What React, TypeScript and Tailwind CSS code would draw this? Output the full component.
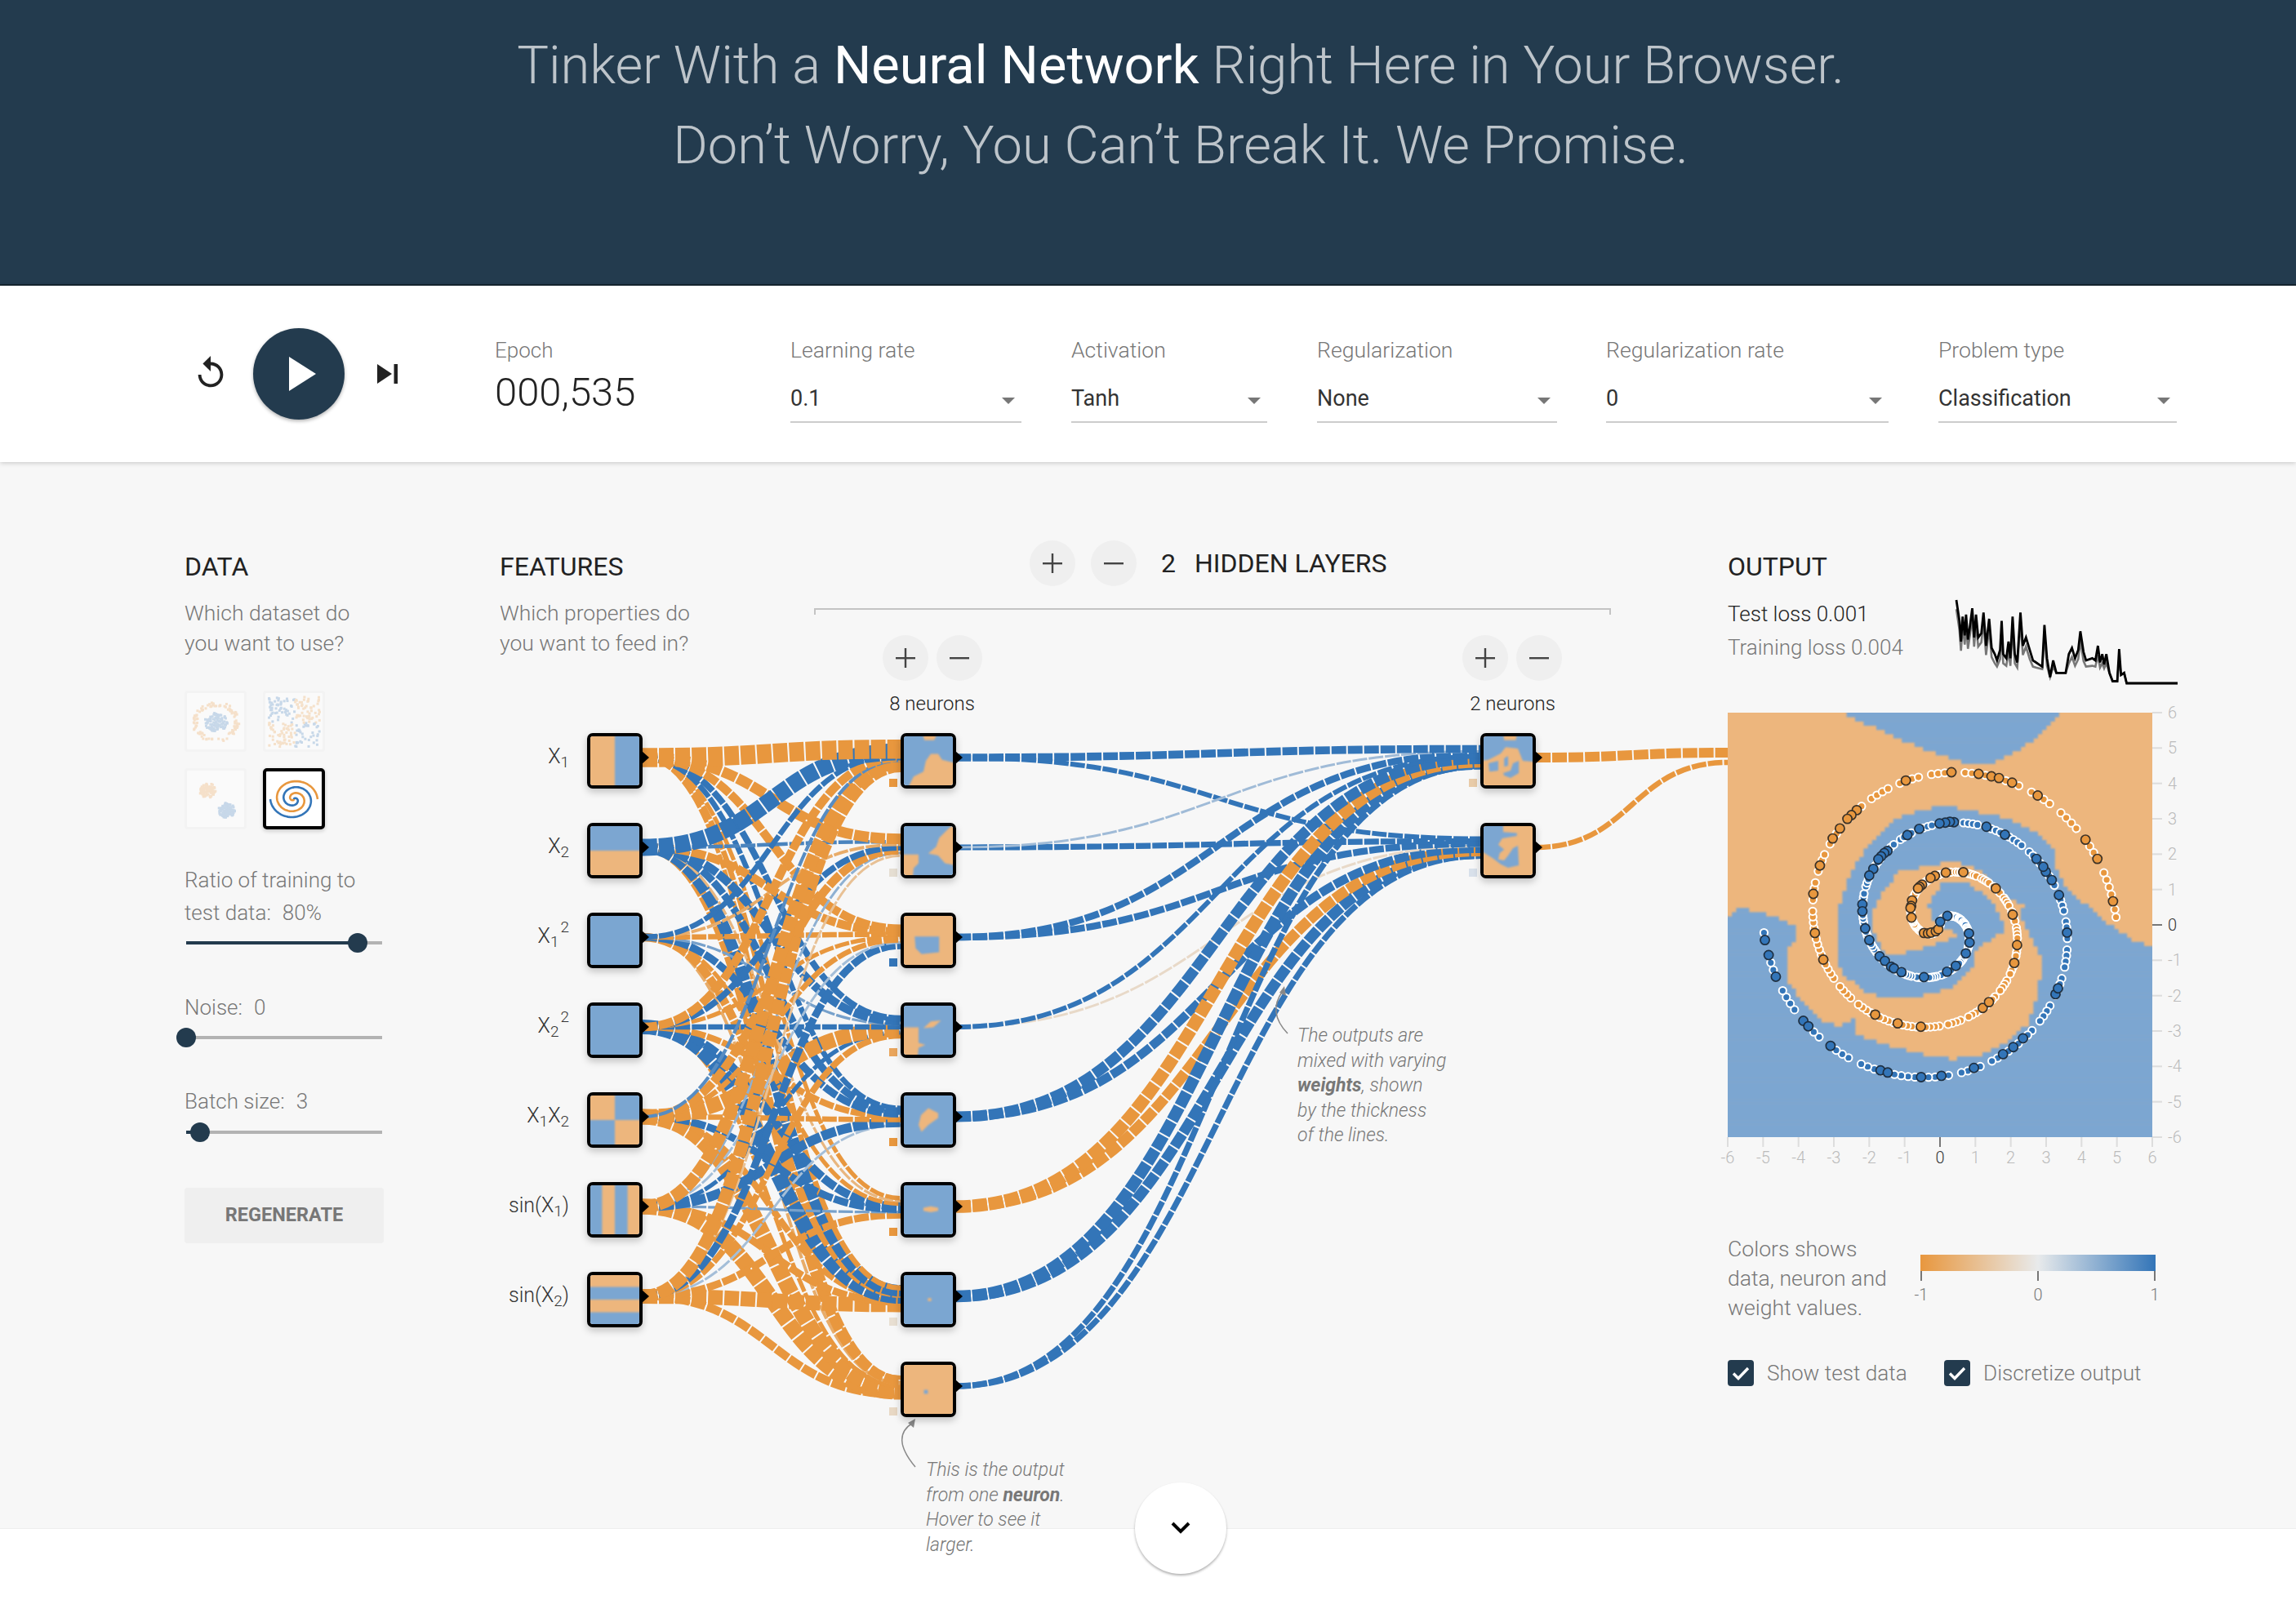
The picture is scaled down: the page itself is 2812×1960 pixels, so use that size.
import { useMemo } from 'react';

const ORANGE = '#E8973E';
const BLUE = '#3375B8';
const HEAT_ORANGE = '#EDB67D';
const HEAT_BLUE = '#7BA6D1';

type Poly = number[][];

// signed stroke width: positive is blue, negative is orange
const layer1: number[][] = [
  [-18, 16, 5, -8, 3.2, -12, -12],
  [-10, 3.5, -3, 6, -8, 2, -2],
  [-8, -8, -5, -4, -5, 1.5, 7],
  [6, 8, 2.5, 5, -14, 4, -6],
  [5, 7, 7, -6, -5, 9, 1.5],
  [-4, -2.5, -4, 8, 7, 2.5, -7],
  [-5, 11, -8, 14, -6, -7, -14],
  [-4, -9, -3, -4, -15, -15, -8],
];
const layer2: number[][] = [
  [8, 1.6, 7, 5, 11, -13, 12, 6],
  [5, 6, 7, -0.8, 9, -11, 11, 6],
];

const rows = [932, 1042, 1152, 1262, 1372, 1482, 1592, 1702];

const mix = (a: string, b: string, t: number) => {
  const p = (s: string, i: number) => parseInt(s.slice(i, i + 2), 16);
  const c = [1, 3, 5].map((i) => Math.round(p(a, i) + (p(b, i) - p(a, i)) * t));
  return `rgb(${c[0]},${c[1]},${c[2]})`;
};

const linkColor = (w: number) =>
  mix('#E8EAEB', w > 0 ? BLUE : ORANGE, Math.min(1, Math.abs(w) / 4));

const Link = ({ x1, y1, x2, y2, w, scale }: { x1: number; y1: number; x2: number; y2: number; w: number; scale: number }) => {
  const mx = (x1 + x2) / 2;
  return (
    <path
      d={`M${x1} ${y1}C${mx} ${y1} ${mx} ${y2} ${x2} ${y2}`}
      fill="none"
      stroke={linkColor(w)}
      strokeWidth={Math.max(3, Math.abs(w) * scale)}
      strokeDasharray="18 2"
    />
  );
};

const Network = () => {
  const links = [];
  for (let k = 1; k >= 0; k--) {
    links.push(<Link key={`o${k}`} x1={1881} y1={rows[k] - 4} x2={2116} y2={928 + (k === 0 ? -6 : 6)} w={k === 0 ? -12 : -6.5} scale={1} />);
  }
  for (let k = 1; k >= 0; k--) {
    for (let j = 7; j >= 0; j--) {
      links.push(
        <Link key={`b${k}${j}`} x1={1171} y1={rows[j] - 4} x2={1813} y2={rows[k] - 4 + ((j - 3.5) / 8) * 24} w={layer2[k][j]} scale={1.2} />,
      );
    }
  }
  for (let j = 7; j >= 0; j--) {
    for (let i = 6; i >= 0; i--) {
      links.push(
        <Link key={`a${j}${i}`} x1={787} y1={rows[i] - 4} x2={1103} y2={rows[j] - 4 + ((i - 3) / 7) * 24} w={layer1[j][i]} scale={1.3} />,
      );
    }
  }
  return (
    <svg className="absolute left-0 top-0 overflow-visible" width={1505} height={1040} viewBox="611 846 1505 1040">
      <defs>
        <filter id="soft" filterUnits="userSpaceOnUse" x="-10" y="-10" width="120" height="120">
          <feGaussianBlur stdDeviation="1.4" />
        </filter>
      </defs>
      {links}
      <g fill="#888">
        <path d="M1577 1266Q1552 1240 1571 1214" fill="none" stroke="#888" strokeWidth="1.5" />
        <polygon points="1573,1208 1575,1220 1567,1216" />
        <path d="M1121 1797Q1090 1760 1118 1743" fill="none" stroke="#888" strokeWidth="1.5" />
        <polygon points="1121,1738 1119,1749 1112,1743" />
      </g>
    </svg>
  );
};

// small picture inside a node, coordinates 0..100
const Thumb = ({ bg, fg, polys }: { bg: string; fg: string; polys: Poly[] }) => (
  <svg viewBox="0 0 100 100" className="block w-full h-full">
    <rect x="0" y="0" width="100" height="100" fill={bg} />
    <g filter="url(#soft)">
      {polys.map((p, i) => (
        <polygon
          key={i}
          fill={fg}
          points={p.map(([x, y]) => `${x <= 0 ? -6 : x >= 100 ? 106 : x},${y <= 0 ? -6 : y >= 100 ? 106 : y}`).join(' ')}
        />
      ))}
    </g>
  </svg>
);

const rect = (x1: number, y1: number, x2: number, y2: number): Poly => [
  [x1, y1],
  [x2, y1],
  [x2, y2],
  [x1, y2],
];

const Node = ({ x, y, bg, fg, polys }: { x: number; y: number; bg: string; fg: string; polys: Poly[] }) => (
  <>
    <div
      className="absolute w-[68px] h-[68px] rounded-[7px] border-4 border-black overflow-hidden bg-white shadow-[0_4px_10px_rgba(0,0,0,0.22)]"
      style={{ left: x - 611, top: y - 34 - 846 }}
    >
      <Thumb bg={bg} fg={fg} polys={polys} />
    </div>
    <svg className="absolute" width={9} height={16} style={{ left: x + 68 - 611 - 1, top: y - 4 - 8 - 846 }}>
      <polygon points="0,0 9,8 0,16" fill="#000" />
    </svg>
  </>
);

const inputNodes: { label: React.ReactNode; bg: string; fg: string; polys: Poly[] }[] = [
  { label: <>X<sub className="text-[19px]">1</sub></>, bg: HEAT_ORANGE, fg: HEAT_BLUE, polys: [rect(50, 0, 100, 100)] },
  { label: <>X<sub className="text-[19px]">2</sub></>, bg: HEAT_ORANGE, fg: HEAT_BLUE, polys: [rect(0, 0, 100, 50)] },
  { label: <>X<sub className="text-[19px]">1</sub><sup className="text-[19px] ml-[2px] top-[-0.7em]">2</sup></>, bg: HEAT_BLUE, fg: HEAT_BLUE, polys: [] },
  { label: <>X<sub className="text-[19px]">2</sub><sup className="text-[19px] ml-[2px] top-[-0.7em]">2</sup></>, bg: HEAT_BLUE, fg: HEAT_BLUE, polys: [] },
  {
    label: <>X<sub className="text-[19px]">1</sub>X<sub className="text-[19px]">2</sub></>,
    bg: HEAT_BLUE,
    fg: HEAT_ORANGE,
    polys: [rect(0, 0, 50, 50), rect(50, 50, 100, 100)],
  },
  {
    label: <>sin(X<sub className="text-[19px]">1</sub>)</>,
    bg: HEAT_BLUE,
    fg: HEAT_ORANGE,
    polys: [rect(24, 0, 50, 100), rect(76, 0, 100, 100)],
  },
  {
    label: <>sin(X<sub className="text-[19px]">2</sub>)</>,
    bg: HEAT_BLUE,
    fg: HEAT_ORANGE,
    polys: [rect(0, 0, 100, 24), rect(0, 50, 100, 76)],
  },
];

const hidden1: { bg: string; fg: string; polys: Poly[]; bias: string }[] = [
  {
    bg: HEAT_BLUE,
    fg: HEAT_ORANGE,
    bias: ORANGE,
    polys: [
      [[8, 100], [20, 82], [40, 72], [45, 50], [55, 36], [70, 36], [78, 48], [100, 55], [100, 100]],
      [[38, 0], [68, 0], [62, 8], [42, 8]],
    ],
  },
  {
    bg: HEAT_BLUE,
    fg: HEAT_ORANGE,
    bias: '#E5DED2',
    polys: [
      [[100, 0], [92, 4], [72, 24], [66, 42], [50, 56], [70, 60], [84, 76], [100, 80]],
      [[0, 58], [30, 58], [30, 76], [20, 86], [18, 100], [0, 100]],
    ],
  },
  { bg: HEAT_ORANGE, fg: HEAT_BLUE, bias: BLUE, polys: [[[22, 42], [72, 42], [72, 74], [36, 78], [24, 66]]] },
  {
    bg: HEAT_BLUE,
    fg: HEAT_ORANGE,
    bias: '#E9A55C',
    polys: [
      [[0, 44], [30, 44], [30, 76], [44, 80], [30, 86], [28, 100], [0, 100]],
      [[40, 46], [55, 32], [76, 30], [60, 44]],
    ],
  },
  { bg: HEAT_BLUE, fg: HEAT_ORANGE, bias: ORANGE, polys: [[[35, 40], [50, 26], [70, 36], [70, 46], [50, 60], [36, 74], [30, 60]]] },
  { bg: HEAT_BLUE, fg: HEAT_ORANGE, bias: ORANGE, polys: [[[40, 46], [55, 43], [70, 46], [70, 52], [55, 55], [40, 52]]] },
  { bg: HEAT_BLUE, fg: HEAT_ORANGE, bias: '#E8DFD2', polys: [[[49, 47], [56, 47], [56, 53], [49, 53]]] },
  { bg: HEAT_ORANGE, fg: HEAT_BLUE, bias: '#E8D8C4', polys: [[[41, 51], [49, 51], [49, 59], [41, 59]]] },
];

const hidden2: { bg: string; fg: string; polys: Poly[]; bias: string }[] = [
  {
    bg: HEAT_ORANGE,
    fg: HEAT_BLUE,
    bias: '#E8CBA8',
    polys: [
      [[0, 0], [40, 0], [42, 8], [66, 8], [68, 0], [100, 0], [100, 52], [80, 50], [70, 25], [45, 22], [35, 35], [10, 48], [0, 50]],
      [[10, 55], [30, 50], [30, 70], [12, 72]],
      [[42, 45], [50, 40], [50, 60], [42, 62]],
      [[40, 75], [55, 70], [60, 55], [72, 50], [72, 75], [55, 85], [42, 80]],
    ],
  },
  {
    bg: HEAT_ORANGE,
    fg: HEAT_BLUE,
    bias: '#D8E0EA',
    polys: [[[0, 0], [40, 0], [40, 12], [68, 14], [68, 20], [38, 25], [30, 38], [42, 48], [33, 55], [30, 68], [42, 70], [50, 60], [60, 45], [70, 40], [72, 80], [50, 85], [35, 78], [18, 65], [0, 50]]],
  },
];

const Diagram = () => (
  <div className="relative z-10 w-[1505px] h-[1040px]">
    <Network />
    {inputNodes.map((n, i) => (
      <div key={i}>
        <div
          className="absolute left-0 w-[86px] h-[40px] flex items-center justify-end text-[25px] text-[#333] whitespace-nowrap"
          style={{ top: rows[i] - 25 - 846 }}
        >
          <span>{n.label}</span>
        </div>
        <Node x={719} y={rows[i]} bg={n.bg} fg={n.fg} polys={n.polys} />
      </div>
    ))}
    {hidden1.map((n, i) => (
      <div key={i}>
        <div className="absolute w-[10px] h-[10px]" style={{ left: 1089 - 611, top: rows[i] + 22 - 846, background: n.bias }} />
        <Node x={1103} y={rows[i]} bg={n.bg} fg={n.fg} polys={n.polys} />
      </div>
    ))}
    {hidden2.map((n, i) => (
      <div key={i}>
        <div className="absolute w-[10px] h-[10px]" style={{ left: 1799 - 611, top: rows[i] + 22 - 846, background: n.bias }} />
        <Node x={1813} y={rows[i]} bg={n.bg} fg={n.fg} polys={n.polys} />
      </div>
    ))}
    <div className="absolute left-[477px] top-[2px] w-[107px] text-center text-[24px] leading-[28px] text-[#222] whitespace-nowrap">8 neurons</div>
    <div className="absolute left-[1188px] top-[2px] w-[107px] text-center text-[24px] leading-[28px] text-[#222] whitespace-nowrap">2 neurons</div>
    <div className="absolute left-[978px] top-[408px] text-[23px] leading-[30.5px] italic text-[#777]">
      The outputs are<br />mixed with varying<br /><b className="font-bold">weights</b>, shown<br />by the thickness<br />of the lines.
    </div>
    <div className="absolute left-[523px] top-[940px] text-[23px] leading-[30.5px] italic text-[#777]">
      This is the output<br />from one <b className="font-bold">neuron</b>.<br />Hover to see it<br />larger.
    </div>
  </div>
);

const RoundBtn = ({ plus }: { plus?: boolean }) => (
  <button className="w-[56px] h-[56px] rounded-full bg-[#EFEFEF] flex items-center justify-center shrink-0">
    <svg width="24" height="24" viewBox="0 0 24 24">
      <rect x="0" y="11" width="24" height="2.4" fill="#444" />
      {plus && <rect x="10.8" y="0" width="2.4" height="24" fill="#444" />}
    </svg>
  </button>
);

const Select = ({ label, value, w, ml }: { label: string; value: string; w: string; ml: string }) => (
  <div className={`${w} ${ml} shrink-0`}>
    <div className="text-[26.6px] leading-[32px] text-[#777]">{label}</div>
    <div className="mt-[23px] h-[50px] border-b-2 border-[#CCC] flex items-start justify-between pr-[8px]">
      <span className="text-[27px] leading-[40px] text-[#333] font-normal">{value}</span>
      <svg width="16" height="8" className="mt-[19px]">
        <polygon points="0,0 16,0 8,8" fill="#777" />
      </svg>
    </div>
  </div>
);

const TopBar = () => (
  <div className="relative z-20 h-[216px] bg-white shadow-[0_1px_6px_rgba(0,0,0,0.2)] flex pl-[235px]">
    <div className="mt-[84px] w-[46px] h-[46px]">
      <svg width="46" height="46" viewBox="0 0 24 24">
        <path d="M12 5V1L7 6l5 5V7c3.31 0 6 2.69 6 6s-2.69 6-6 6-6-2.69-6-6H4c0 4.42 3.58 8 8 8s8-3.58 8-8-3.58-8-8-8z" fill="#222" />
      </svg>
    </div>
    <button className="ml-[29px] mt-[52px] w-[112px] h-[112px] rounded-full bg-[#233B4E] flex items-center justify-center shadow-[0_2px_4px_rgba(0,0,0,0.3)]">
      <svg width="33" height="42" className="ml-[8px]">
        <polygon points="0,0 33,21 0,42" fill="#fff" />
      </svg>
    </button>
    <svg className="ml-[40px] mt-[96px]" width="25" height="24">
      <polygon points="0,0 18,12 0,24" fill="#222" />
      <rect x="20.5" y="0" width="4.5" height="24" fill="#222" />
    </svg>
    <div className="ml-[119px] mt-[63px] w-[362px] shrink-0">
      <div className="text-[26px] leading-[32px] text-[#777]">Epoch</div>
      <div className="mt-[8px] text-[49px] leading-[56px] text-[#222]">000,535</div>
    </div>
    <div className="mt-[63px] flex">
      <Select label="Learning rate" value="0.1" w="w-[283px]" ml="ml-0" />
      <Select label="Activation" value="Tanh" w="w-[240px]" ml="ml-[61px]" />
      <Select label="Regularization" value="None" w="w-[294px]" ml="ml-[61px]" />
      <Select label="Regularization rate" value="0" w="w-[346px]" ml="ml-[60px]" />
      <Select label="Problem type" value="Classification" w="w-[292px]" ml="ml-[61px]" />
    </div>
  </div>
);

const rand = (seed: number) => {
  const v = Math.sin(seed * 127.1 + 311.7) * 43758.5453;
  return v - Math.floor(v);
};

const DataThumb = ({ kind }: { kind: 'circle' | 'xor' | 'gauss' }) => {
  const dots = useMemo(() => {
    const out: { x: number; y: number; c: string }[] = [];
    for (let i = 0; i < 200; i++) {
      const a = rand(i) * Math.PI * 2;
      const b = rand(i + 500);
      const c = rand(i + 900);
      if (kind === 'circle') {
        const r = i % 2 ? 23 + b * 6 : Math.sqrt(b) * 14;
        const sy = i % 2 ? 0.85 : 0.8;
        out.push({ x: 37 + Math.cos(a) * r, y: 37 + Math.sin(a) * r * sy, c: i % 2 ? ORANGE : BLUE });
      } else if (kind === 'xor') {
        const x = 6 + b * 62;
        const y = 6 + c * 62;
        out.push({ x, y, c: (x < 38) === (y < 38) ? BLUE : ORANGE });
      } else {
        const r = Math.sqrt(b) * 10;
        const cx = i % 2 ? 27 : 50;
        const cy = i % 2 ? 26 : 50;
        out.push({ x: cx + Math.cos(a) * r, y: cy + Math.sin(a) * r * 0.9, c: i % 2 ? ORANGE : BLUE });
      }
    }
    return out;
  }, [kind]);
  return (
    <div className="w-[76px] h-[75px] rounded-[4px] border-[3px] border-[#F3F3F3] bg-[#FAFAFA] overflow-hidden">
      <svg viewBox="3 3 70 69" className="block w-full h-full opacity-25">
        {dots.map((d, i) => (
          <rect key={i} x={d.x} y={d.y} width="3" height="3" fill={d.c} />
        ))}
      </svg>
    </div>
  );
};

const spiralPath = (delta: number, scale: number, c: number) => {
  const pts: string[] = [];
  for (let i = 0; i <= 120; i++) {
    const f = i / 120;
    const r = f * 5 * scale;
    const t = 1.75 * f * 2 * Math.PI + delta;
    pts.push(`${(c + r * Math.sin(t)).toFixed(1)},${(c - r * Math.cos(t) * 0.88).toFixed(1)}`);
  }
  return pts.join(' ');
};

const SpiralThumb = () => (
  <div className="w-[76px] h-[75px] rounded-[5px] border-4 border-black bg-white overflow-hidden shadow-[0_2px_5px_rgba(0,0,0,0.2)]">
    <svg viewBox="4 4 68 67" className="block w-full h-full">
      <polyline points={spiralPath(Math.PI, 5.8, 38)} fill="none" stroke={ORANGE} strokeWidth="2.6" />
      <polyline points={spiralPath(0, 5.8, 38)} fill="none" stroke={BLUE} strokeWidth="2.6" />
    </svg>
  </div>
);

const Slider = ({ at, fill }: { at: number; fill?: boolean }) => (
  <div className="relative ml-[2px] w-[240px] h-[24px] flex items-center">
    <div className="w-full h-[4px] bg-[#B3B3B3]" />
    {fill && <div className="absolute left-0 top-[10px] h-[4px] bg-[#233B4E]" style={{ width: at }} />}
    <div className="absolute top-0 w-[24px] h-[24px] rounded-full bg-[#233B4E]" style={{ left: at - 12 }} />
  </div>
);

const DataColumn = () => (
  <div className="w-[385px] shrink-0 pt-[108px]">
    <h4 className="text-[32px] leading-[40px] text-[#222] font-normal">DATA</h4>
    <p className="mt-[18px] text-[26.5px] leading-[37px] text-[#777]">Which dataset do<br />you want to use?</p>
    <div className="mt-[40px] grid grid-cols-[76px_76px] gap-x-[20px] gap-y-[20px]">
      <DataThumb kind="circle" />
      <DataThumb kind="xor" />
      <DataThumb kind="gauss" />
      <SpiralThumb />
    </div>
    <p className="mt-[42px] text-[26px] leading-[40px] text-[#777]">Ratio of training to<br />test data:<span className="ml-[14px]">80%</span></p>
    <div className="mt-[5px]"><Slider at={210} fill /></div>
    <p className="mt-[47px] text-[26px] leading-[40px] text-[#777]">Noise:<span className="ml-[14px]">0</span></p>
    <div className="mt-[5px]"><Slider at={0} /></div>
    <p className="mt-[46px] text-[26px] leading-[40px] text-[#777]">Batch size:<span className="ml-[14px]">3</span></p>
    <div className="mt-[6px]"><Slider at={17} fill /></div>
    <button className="mt-[56px] w-[244px] h-[68px] rounded-[4px] bg-[#EFEFEF] text-[23.5px] font-bold text-[#777]">REGENERATE</button>
  </div>
);

const MiddleColumn = () => (
  <div className="w-[1505px] shrink-0 pt-[96px]">
    <div className="flex h-[184px]">
      <div className="w-[386px] shrink-0 pl-[1px] pt-[12px]">
        <h4 className="text-[32px] leading-[40px] text-[#222] font-normal">FEATURES</h4>
        <p className="mt-[18px] text-[26.5px] leading-[37px] text-[#777]">Which properties do<br />you want to feed in?</p>
      </div>
      <div className="w-[976px] shrink-0">
        <div className="flex items-center pl-[264px]">
          <RoundBtn plus />
          <div className="ml-[19px]"><RoundBtn /></div>
          <div className="ml-[30px] text-[32px] leading-[40px] text-[#222] font-normal whitespace-nowrap">2<span className="ml-[23px]">HIDDEN LAYERS</span></div>
        </div>
        <div className="mt-[27px] h-[8px] border-t-2 border-x-2 border-[#C4C4C4]" />
        <div className="mt-[25px] flex pl-[84px]">
          <RoundBtn plus />
          <div className="ml-[10px]"><RoundBtn /></div>
          <div className="ml-[588px]"><RoundBtn plus /></div>
          <div className="ml-[10px]"><RoundBtn /></div>
        </div>
      </div>
    </div>
    <Diagram />
  </div>
);

// corners of the blue area, read off the reference heat map at 2.613 x 1.96 scale
const bluePoly: Poly = [
  [1452, 985], [1452, 1440], [94, 1440], [94, 908], [125, 885], [160, 892], [230, 905], [310, 930], [310, 960], [285, 990], [285, 1060],
  [330, 1110], [390, 1160], [450, 1170], [500, 1150], [500, 1190], [600, 1215], [700, 1235], [810, 1250], [900, 1240], [980, 1210],
  [1050, 1170], [1085, 1100], [1100, 1015], [1060, 950], [1030, 900], [1045, 880], [1010, 870], [960, 840], [900, 795], [815, 775],
  [730, 785], [640, 800], [590, 850], [555, 900], [555, 940], [600, 1000], [700, 990], [840, 950], [760, 930], [735, 880], [780, 830],
  [850, 825], [920, 860], [965, 900], [980, 940], [890, 985], [880, 1030], [800, 1080], [690, 1100], [590, 1100], [530, 1085], [460, 1045],
  [445, 1000], [450, 880], [470, 840], [500, 780], [540, 745], [590, 705], [640, 670], [700, 655], [780, 640], [880, 655], [960, 665],
  [1040, 690], [1100, 715], [1140, 750], [1140, 790], [1180, 840], [1240, 880], [1300, 920], [1380, 960],
];
const topBlue: Poly = [
  [460, 415], [500, 435], [560, 450], [640, 480], [720, 505], [800, 525], [860, 540], [940, 538], [1000, 520], [1060, 490], [1120, 450], [1160, 415],
];

const inPoly = (p: Poly, x: number, y: number) => {
  let inside = false;
  for (let i = 0, j = p.length - 1; i < p.length; j = i++) {
    const [xi, yi] = p[i];
    const [xj, yj] = p[j];
    if (yi > y !== yj > y && x < ((xj - xi) * (y - yi)) / (yj - yi) + xi) inside = !inside;
  }
  return inside;
};

const testOrange = [[664,581],[810,561],[897,565],[938,571],[962,575],[1004,586],[1086,617],[1239,723],[1277,769],[1327,871],[507,652],[490,664],[477,673],[453,696],[430,720],[389,785],[368,853],[373,947],[400,1011],[566,1143],[638,1164],[712,1172],[910,1127],[930,1113],[1011,1019],[1020,976],[1006,903],[952,840],[848,801],[792,802],[757,810],[743,815],[716,831],[708,836],[703,840],[684,869],[681,882],[679,887],[682,910],[722,947],[735,948],[745,946],[760,943],[768,938]];
const testBlue = [[213,964],[225,1000],[248,1052],[336,1158],[352,1171],[423,1218],[583,1277],[606,1282],[713,1293],[778,1290],[882,1271],[975,1238],[1008,1221],[1039,1200],[1143,1094],[1151,1080],[1180,946],[1154,856],[1131,820],[1112,800],[1104,788],[1082,769],[981,711],[922,692],[818,681],[805,680],[790,682],[772,684],[707,697],[669,712],[605,750],[595,755],[585,763],[576,770],[560,793],[547,809],[525,878],[525,895],[534,936],[547,964],[580,1003],[597,1014],[617,1028],[626,1032],[650,1041],[722,1053],[796,1040],[824,1026],[856,996],[868,970],[866,948],[797,906],[774,920]];

const vx = (z: number) => (z - 94) / 2.613;
const vy = (z: number) => (z - 418) / 1.96;

const Heatmap = () => {
  const runs = useMemo(() => {
    const out: { x: number; y: number; w: number }[] = [];
    const isBlue = (cx: number, cy: number) => {
      const zx = 94 + ((Math.min(99, Math.max(0, cx)) + 0.5) / 100) * 1358;
      const zy = 418 + ((Math.min(99, Math.max(0, cy)) + 0.5) / 100) * 1019;
      return inPoly(bluePoly, zx, zy) || inPoly(topBlue, zx, zy);
    };
    for (let cy = -2; cy < 102; cy++) {
      let start: number | null = null;
      for (let cx = -2; cx <= 102; cx++) {
        const on = cx < 102 && isBlue(cx, cy);
        if (on && start === null) start = cx;
        if (!on && start !== null) {
          out.push({ x: start * 5.2, y: cy * 5.2, w: (cx - start) * 5.2 });
          start = null;
        }
      }
    }
    return out;
  }, []);
  const train = useMemo(() => {
    const out: { x: number; y: number; c: string }[] = [];
    for (let i = 0; i < 250; i++) {
      if (i % 5 === 2) continue;
      const f = i / 250;
      const r = f * 5;
      const t = 1.75 * f * 2 * Math.PI;
      [0, Math.PI].forEach((d) => {
        const x = r * Math.sin(t + d);
        const y = r * Math.cos(t + d);
        out.push({ x: ((x + 6) / 12) * 520, y: ((6 - y) / 12) * 520, c: d === 0 ? BLUE : ORANGE });
      });
    }
    return out;
  }, []);
  const ticks = [-6, -5, -4, -3, -2, -1, 0, 1, 2, 3, 4, 5, 6];
  return (
    <svg width={560} height={560} className="block overflow-visible">
      <defs>
        <filter id="soft2">
          <feGaussianBlur stdDeviation="0.9" />
        </filter>
      </defs>
      <svg width={520} height={520} viewBox="0 0 520 520">
        <rect x="0" y="0" width="520" height="520" fill={HEAT_ORANGE} />
        <g filter="url(#soft2)">
          {runs.map((r, i) => (
            <rect key={i} x={r.x} y={r.y} width={r.w + 0.4} height={5.6} fill={HEAT_BLUE} />
          ))}
        </g>
      </svg>
      {train.map((p, i) => (
        <circle key={i} cx={p.x} cy={p.y} r={4.6} fill={p.c} stroke="#fff" strokeWidth={2} />
      ))}
      {testOrange.map(([x, y], i) => (
        <circle key={i} cx={vx(x)} cy={vy(y)} r={5.6} fill={ORANGE} stroke="#3B3126" strokeWidth={1.7} />
      ))}
      {testBlue.map(([x, y], i) => (
        <circle key={i} cx={vx(x)} cy={vy(y)} r={5.6} fill={BLUE} stroke="#1D2F42" strokeWidth={1.7} />
      ))}
      {ticks.map((t) => {
        const p = ((t + 6) / 12) * 520;
        const q = ((6 - t) / 12) * 520;
        const line = t === 0 ? '#777' : '#DDD';
        const text = t === 0 ? '#333' : '#BBB';
        return (
          <g key={t}>
            <line x1={p} y1={520} x2={p} y2={532} stroke={line} strokeWidth={2} />
            <text x={p} y={552} textAnchor="middle" fontSize={20} fill={text}>{t}</text>
            <line x1={520} y1={q} x2={532} y2={q} stroke={line} strokeWidth={2} />
            <text x={539} y={q + 7} fontSize={20} fill={text}>{t}</text>
          </g>
        );
      })}
    </svg>
  );
};

const lossRaw = [[825,150],[835,200],[840,250],[845,190],[852,235],[856,185],[862,245],[868,215],[876,170],[882,240],[888,185],[895,240],[905,230],[912,180],[920,260],[930,195],[938,265],[948,280],[955,295],[965,270],[970,200],[975,280],[985,290],[992,250],[998,290],[1005,190],[1012,280],[1020,300],[1030,180],[1038,260],[1048,240],[1060,270],[1070,295],[1080,300],[1090,305],[1100,310],[1107,210],[1115,290],[1125,335],[1135,295],[1145,325],[1175,325],[1185,280],[1195,265],[1205,290],[1215,270],[1222,225],[1232,275],[1240,295],[1260,290],[1270,295],[1278,260],[1285,300],[1292,280],[1298,305],[1305,280],[1315,325],[1325,345],[1340,345],[1346,268],[1352,330],[1362,325],[1370,350],[1533,350]];

const LossChart = () => {
  const toPts = (dy: number) =>
    lossRaw
      .map(([x, y], i) => {
        const extra = i < lossRaw.length - 2 && y < 320 ? Math.min(dy, (320 - y) * 0.6) : 0;
        return `${((x - 825) / 2.613).toFixed(1)},${((y + extra - 150) / 1.96).toFixed(1)}`;
      })
      .join(' ');
  return (
    <svg width={271} height={103} className="block overflow-visible">
      <polyline points={toPts(22)} fill="none" stroke="#777" strokeWidth={2.6} />
      <polyline points={toPts(0)} fill="none" stroke="#000" strokeWidth={2.8} />
    </svg>
  );
};

const Check = ({ label }: { label: string }) => (
  <div className="flex items-center">
    <div className="w-[32px] h-[32px] rounded-[4px] bg-[#233B4E] flex items-center justify-center">
      <svg width="22" height="18" viewBox="0 0 22 18">
        <path d="M2 9.5l6 6L20 3" fill="none" stroke="#fff" strokeWidth="3.4" />
      </svg>
    </div>
    <span className="ml-[16px] text-[26.2px] text-[#777] leading-[32px] whitespace-nowrap">{label}</span>
  </div>
);

const OutputColumn = () => (
  <div className="w-[600px] shrink-0 pt-[108px]">
    <h4 className="text-[32px] leading-[40px] text-[#222] font-normal">OUTPUT</h4>
    <div className="mt-[18px] h-[141px] flex">
      <div className="w-[280px] shrink-0 text-[26px] leading-[41px] whitespace-nowrap">
        <div className="text-[#222]">Test loss 0.001</div>
        <div className="text-[#777]">Training loss 0.004</div>
      </div>
      <div className="mt-[3px]"><LossChart /></div>
    </div>
    <Heatmap />
    <div className="mt-[79px] flex">
      <p className="w-[236px] shrink-0 text-[26.6px] leading-[36px] text-[#777]">Colors shows<br />data, neuron and<br />weight values.</p>
      <div className="w-[288px] mt-[25px]">
        <div className="h-[20px] bg-[linear-gradient(to_right,#E8973E,#E8EAEB_50%,#3375B8)]" />
        <div className="flex justify-between text-[20px] leading-[24px] text-[#777]">
          <div className="w-[2px] flex flex-col items-center"><div className="w-[2px] h-[12px] shrink-0 bg-[#777]" /><span className="mt-[5px]">-1</span></div>
          <div className="w-[2px] flex flex-col items-center"><div className="w-[2px] h-[12px] shrink-0 bg-[#777]" /><span className="mt-[5px]">0</span></div>
          <div className="w-[2px] flex flex-col items-center"><div className="w-[2px] h-[12px] shrink-0 bg-[#777]" /><span className="mt-[5px]">1</span></div>
        </div>
      </div>
    </div>
    <div className="mt-[46px] flex">
      <div className="w-[265px]"><Check label="Show test data" /></div>
      <Check label="Discretize output" />
    </div>
  </div>
);

export default function App() {
  return (
    <div className="w-[2812px] h-[1960px] overflow-hidden bg-white font-['Roboto',sans-serif] font-light">
      <header className="h-[350px] bg-[#233B4E] border-b-2 border-[#15252F] pt-[31px] pl-[80px] text-center text-[65px] leading-[98px] text-white/70">
        <div>Tinker With a <b className="font-normal text-white">Neural Network</b> Right Here in Your Browser.</div>
        <div>Don’t Worry, You Can’t Break It. We Promise.</div>
      </header>
      <TopBar />
      <main className="h-[1306px] bg-[#F7F7F7] flex pl-[226px]">
        <DataColumn />
        <MiddleColumn />
        <OutputColumn />
      </main>
      <footer className="relative h-[88px] bg-white border-t border-[#EEE]">
        <button className="absolute z-20 left-[1390px] top-[-57px] w-[112px] h-[112px] rounded-full bg-white shadow-[0_2px_3px_rgba(0,0,0,0.3)] flex items-center justify-center">
          <svg width="24" height="16" viewBox="0 0 24 16">
            <path d="M2 2l10 10L22 2" fill="none" stroke="#000" strokeWidth="4" />
          </svg>
        </button>
      </footer>
    </div>
  );
}
